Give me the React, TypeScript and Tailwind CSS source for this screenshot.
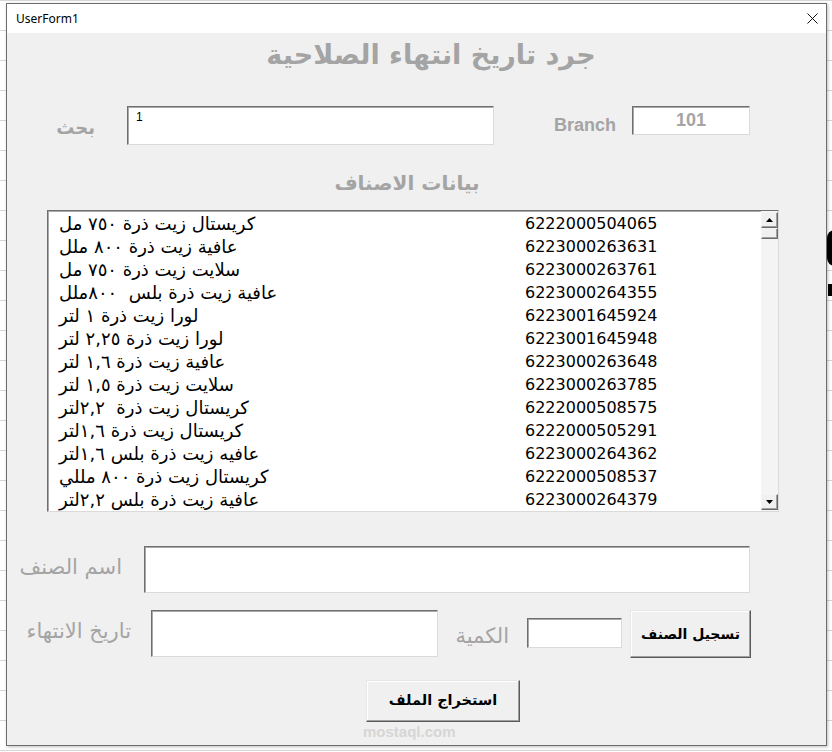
import React from "react";

const rows: [string, string][] = [
  ["كريستال زيت ذرة ٧٥٠ مل", "6222000504065"],
  ["عافية زيت ذرة ٨٠٠ ملل", "6223000263631"],
  ["سلايت زيت ذرة ٧٥٠ مل", "6223000263761"],
  ["عافية زيت ذرة بلس  ٨٠٠ملل", "6223000264355"],
  ["لورا زيت ذرة ١ لتر", "6223001645924"],
  ["لورا زيت ذرة ٢,٢٥ لتر", "6223001645948"],
  ["عافية زيت ذرة ١,٦ لتر", "6223000263648"],
  ["سلايت زيت ذرة ١,٥ لتر", "6223000263785"],
  ["كريستال زيت ذرة  ٢,٢لتر", "6222000508575"],
  ["كريستال زيت ذرة ١,٦لتر", "6222000505291"],
  ["عافيه زيت ذرة بلس ١,٦لتر", "6223000264362"],
  ["كريستال زيت ذرة ٨٠٠ مللي", "6222000508537"],
  ["عافية زيت ذرة بلس ٢,٢لتر", "6223000264379"],
];

const sunken =
  "bg-white border border-t-[#6f6f6f] border-l-[#6f6f6f] border-r-[#dadada] border-b-[#dadada] shadow-[inset_1px_1px_0_#a9a9a9]";
const raised =
  "bg-[#f0f0f0] border border-t-[#e6e6e6] border-l-[#e6e6e6] border-r-[#5a5a5a] border-b-[#5a5a5a] shadow-[inset_-1px_-1px_0_#a0a0a0,inset_1px_1px_0_#ffffff]";

function ScrollBtn({ up }: { up: boolean }) {
  return (
    <div className="w-[17px] h-[16px] bg-[#f0f0f0] border border-t-[#f4f4f4] border-l-[#f4f4f4] border-r-[#6a6a6a] border-b-[#6a6a6a] shadow-[inset_-1px_-1px_0_#a0a0a0] flex items-center justify-center">
      <svg width="7" height="4" viewBox="0 0 7 4">
        {up ? <polygon points="0,4 7,4 3.5,0" fill="#000" /> : <polygon points="0,0 7,0 3.5,4" fill="#000" />}
      </svg>
    </div>
  );
}

export default function App() {
  const ar = { fontFamily: '"DejaVu Sans", sans-serif' };
  return (
    <div className="w-[832px] h-[752px] relative overflow-hidden bg-white bg-[linear-gradient(#d6d6d6_1px,transparent_1px)] bg-[length:100%_30px]">
      <div className="absolute left-[827px] top-[230px] w-[8px] h-[36px] bg-black rounded-l-full" />
      <div className="absolute left-[828px] top-[284px] w-[8px] h-[12px] bg-black" />
      <div className="pt-[3px] pl-[6px] relative">
        <div className="w-[821px] h-[743px] border border-[#6d6d6d] bg-[#f0f0f0] flex flex-col shadow-[1px_1px_3px_rgba(0,0,0,0.25)]">
          {/* title bar */}
          <div className="h-[29px] bg-white flex items-center justify-between pl-[9px] pr-[8px]">
            <span className="text-[12px] text-black" style={{ fontFamily: '"Noto Sans", sans-serif' }}>
              UserForm1
            </span>
            <svg width="11" height="11" viewBox="0 0 11 11">
              <line x1="0.5" y1="0.5" x2="10.5" y2="10.5" stroke="#111" strokeWidth="1" />
              <line x1="10.5" y1="0.5" x2="0.5" y2="10.5" stroke="#111" strokeWidth="1" />
            </svg>
          </div>

          {/* content */}
          <div className="relative flex-1 flex flex-col">
            <div className="h-[44px] flex items-center justify-center pl-[29px]">
              <span dir="rtl" className="text-[27px] font-bold text-[#a4a4a4]" style={ar}>
                جرد تاريخ انتهاء الصلاحية
              </span>
            </div>

            {/* search row */}
            <div className="mt-[29px] h-[39px] flex items-center">
              <div className="w-[120px] flex justify-end pr-[32px] pt-[3px]">
                <span dir="rtl" className="text-[18px] font-bold text-[#a4a4a4]" style={ar}>
                  بحث
                </span>
              </div>
              <div className={`w-[367px] h-[39px] ${sunken} relative`}>
                <span className="absolute left-[8px] top-[1px] text-[12px] text-black" style={{ fontFamily: '"Liberation Sans", sans-serif' }}>
                  1
                </span>
              </div>
              <div className="w-[138px] flex justify-end pr-[16px]">
                <span className="text-[18px] font-bold text-[#a4a4a4]" style={{ fontFamily: '"Liberation Sans", sans-serif' }}>
                  Branch
                </span>
              </div>
              <div className={`w-[118px] h-[29px] self-start ${sunken} flex items-center justify-center`}>
                <span className="text-[18px] font-bold text-[#a4a4a4]" style={{ fontFamily: '"Liberation Sans", sans-serif' }}>
                  101
                </span>
              </div>
            </div>

            {/* list title */}
            <div className="mt-[24px] h-[28px] flex items-center justify-center pr-[19px]">
              <span dir="rtl" className="text-[20px] font-bold text-[#a4a4a4]" style={ar}>
                بيانات الاصناف
              </span>
            </div>

            {/* list box */}
            <div className={`mt-[13px] ml-[40px] w-[732px] h-[302px] ${sunken} flex`}>
              <div className="flex-1 pt-[1px]">
                {rows.map(([name, code], i) => (
                  <div key={i} className="h-[23px] flex items-center text-[16px] text-black" style={ar}>
                    <div className="w-[477px] pl-[11px] text-left text-[18px] leading-[23px] whitespace-pre" dir="rtl">
                      {name}
                    </div>
                    <div>{code}</div>
                  </div>
                ))}
              </div>
              <div className="w-[17px] flex flex-col bg-[#f4f4f4] pt-[1px]">
                <ScrollBtn up />
                <div className="w-[17px] h-[11px] bg-[#f0f0f0] border border-t-[#f4f4f4] border-l-[#f4f4f4] border-r-[#6a6a6a] border-b-[#6a6a6a] shadow-[inset_-1px_-1px_0_#a0a0a0]" />
                <div className="flex-1" />
                <div className="pb-[1px]">
                  <ScrollBtn up={false} />
                </div>
              </div>
            </div>

            {/* item name row */}
            <div className="mt-[34px] h-[47px] flex items-center">
              <div className="w-[137px] flex justify-end pr-[22px] pb-[4px]">
                <span dir="rtl" className="text-[21px] text-[#a4a4a4]" style={ar}>
                  اسم الصنف
                </span>
              </div>
              <div className={`w-[606px] h-[47px] ${sunken}`} />
            </div>

            {/* date / qty / button row */}
            <div className="mt-[17px] h-[48px] flex items-start">
              <div className="w-[144px] h-[48px] flex items-center justify-end pr-[20px] pb-[4px]">
                <span dir="rtl" className="text-[21px] text-[#a4a4a4]" style={ar}>
                  تاريخ الانتهاء
                </span>
              </div>
              <div className={`w-[287px] h-[47px] ${sunken}`} />
              <div className="w-[89px] h-[48px] flex items-center justify-end pr-[18px] pt-[6px]">
                <span dir="rtl" className="text-[21px] text-[#a4a4a4]" style={ar}>
                  الكمية
                </span>
              </div>
              <div className={`mt-[8px] w-[95px] h-[30px] ${sunken}`} />
              <div className={`ml-[8px] w-[121px] h-[48px] ${raised} flex items-center justify-center`}>
                <span dir="rtl" className="text-[14px] font-bold text-black" style={ar}>
                  تسجيل الصنف
                </span>
              </div>
            </div>

            {/* export button */}
            <div className="mt-[22px] flex">
              <div className={`ml-[359px] w-[154px] h-[42px] ${raised} flex items-center justify-center`}>
                <span dir="rtl" className="text-[14.5px] font-bold text-black" style={ar}>
                  استخراج الملف
                </span>
              </div>
            </div>

            {/* watermark */}
            <div className="absolute left-[356px] top-[688px] text-[15px] font-bold text-[#d6d6d6] pointer-events-none" style={{ fontFamily: '"Liberation Sans", sans-serif' }}>
              mostaql.com
            </div>
          </div>
        </div>
      </div>
    </div>
  );
}
